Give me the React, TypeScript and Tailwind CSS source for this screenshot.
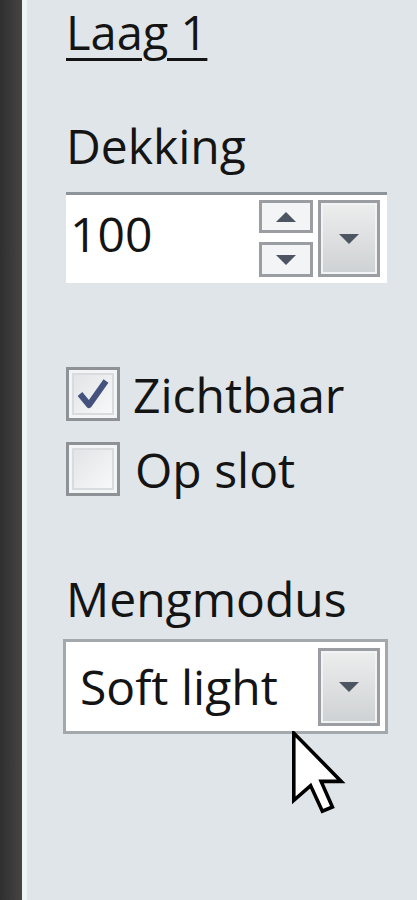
const font = { fontFamily: '"Open Sans", "Noto Sans", sans-serif' };

function Triangle({ up = false, className = '' }: { up?: boolean; className?: string }) {
  return (
    <svg width="22" height="12" viewBox="0 0 22 12" className={className}>
      {up ? <path d="M11 1 L21 11 L1 11 Z" fill="#4d5563" /> : <path d="M1 1 L21 1 L11 11 Z" fill="#4d5563" />}
    </svg>
  );
}

function Checkbox({ checked }: { checked: boolean }) {
  return (
    <div className="w-[54px] h-[54px] border-[3px] border-[#8e9296] bg-[#f3f4f5] p-[3px] shrink-0">
      <div className="w-full h-full border-2 border-[#d9dcdf] bg-gradient-to-br from-[#e2e4e7] to-[#f7f8f9] flex items-center justify-center">
        {checked && (
          <svg width="34" height="32" viewBox="0 0 34 32">
            <path d="M4 16 L13 27 L30 3" fill="none" stroke="#46527e" strokeWidth="6" strokeLinejoin="round" />
          </svg>
        )}
      </div>
    </div>
  );
}

function DropButton({ className = '' }: { className?: string }) {
  return (
    <div className={`border-[3px] border-[#9a9ea2] bg-[#f2f3f4] p-[2px] ${className}`}>
      <div className="w-full h-full bg-gradient-to-b from-[#eceded] to-[#cfd2d4] flex items-center justify-center">
        <Triangle />
      </div>
    </div>
  );
}

export default function App() {
  return (
    <div className="w-[417px] h-[900px] flex bg-[#dfe5e8] text-[#141414] overflow-hidden" style={font}>
      <div className="w-[22px] h-full bg-gradient-to-r from-[#2f2f2f] to-[#454545]" />
      <div className="w-[5px] h-full bg-[#eef3f6]" />
      <div className="relative flex-1 pl-[39px]">
        <div className="text-[47px] leading-[64px] underline decoration-[3px] underline-offset-[8px]">Laag 1</div>

        <div className="mt-[58px] text-[48px] leading-[48px]">Dekking</div>

        <div className="mt-[22px] w-[321px] h-[91px] bg-white border-t-[3px] border-[#8d959b] flex items-start pr-[7px]">
          <div className="flex-1 pl-[4px] text-[48px] leading-[53px] pt-[12px]">100</div>
          <div className="flex flex-col gap-[9px] mt-[5px]">
            <div className="w-[54px] h-[33px] border-[3px] border-[#9a9ea2] bg-[#f3f4f5] flex items-center justify-center">
              <Triangle up />
            </div>
            <div className="w-[54px] h-[35px] border-[3px] border-[#9a9ea2] bg-[#f3f4f5] flex items-center justify-center">
              <Triangle />
            </div>
          </div>
          <DropButton className="ml-[5px] mt-[5px] w-[62px] h-[77px]" />
        </div>

        <div className="mt-[84px] flex items-center gap-[13px]">
          <Checkbox checked />
          <span className="text-[48px] leading-[53px]">Zichtbaar</span>
        </div>
        <div className="mt-[21px] flex items-center gap-[15px]">
          <Checkbox checked={false} />
          <span className="text-[48px] leading-[53px]">Op slot</span>
        </div>

        <div className="mt-[79px] text-[48px] leading-[48px]">Mengmodus</div>

        <div className="mt-[16px] -ml-[3px] w-[325px] h-[95px] bg-white border-[3px] border-[#a3a8ac] flex items-center">
          <div className="flex-1 pl-[14px] text-[48px] leading-[53px]">Soft light</div>
          <DropButton className="mr-[5px] w-[62px] h-[78px]" />
        </div>

        <svg className="absolute left-[264px] top-[731px]" width="56" height="84" viewBox="-0.5 -0.5 13 20">
          <path d="M0 0 L0 16 L4 12.5 L6.8 18.6 L9.2 17.6 L6.5 11.5 L11.3 11.5 Z" fill="#ffffff" stroke="#000000" strokeWidth="0.85" strokeLinejoin="miter" />
        </svg>
      </div>
    </div>
  );
}
